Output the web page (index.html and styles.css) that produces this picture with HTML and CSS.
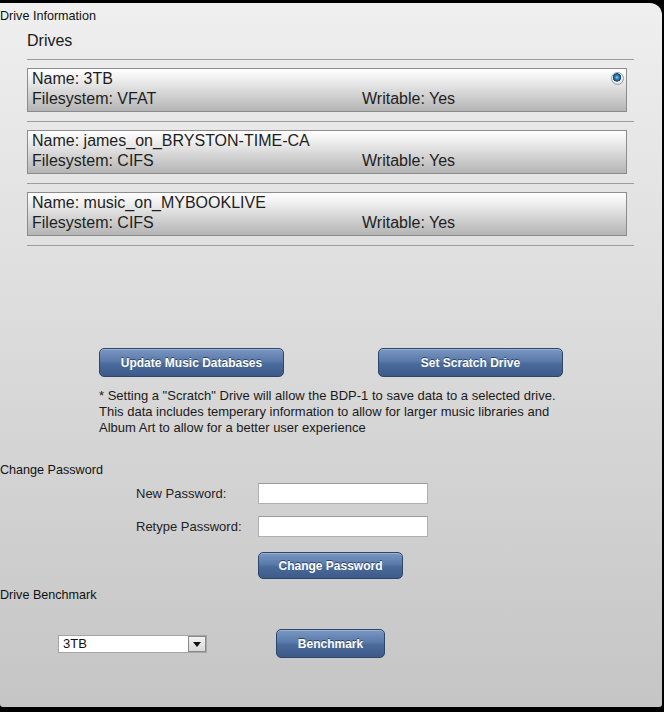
FILE: index.html
```html
<html>
<head>
    <link rel="stylesheet" href="styles.css">
</head>
<body>
<div id='panel'>
    <div class='legend'>Drive Information</div>
    <div id='drives'>
        <div class='title'>Drives</div>
        <div class='rule'></div>
        <div class='drive'>
            <div class='name'>Name: 3TB</div>
            <span class='radio'></span>
            <div class='fs'>Filesystem: VFAT</div>
            <div class='wr'>Writable: Yes</div>
        </div>
        <div class='rule'></div>
        <div class='drive'>
            <div class='name'>Name: james_on_BRYSTON-TIME-CA</div>
            <div class='fs'>Filesystem: CIFS</div>
            <div class='wr'>Writable: Yes</div>
        </div>
        <div class='rule'></div>
        <div class='drive'>
            <div class='name'>Name: music_on_MYBOOKLIVE</div>
            <div class='fs'>Filesystem: CIFS</div>
            <div class='wr'>Writable: Yes</div>
        </div>
        <div class='rule'></div>
    </div>
    <div class='actions'>
        <button class='btn wide'>Update Music Databases</button>
        <button class='btn wide'>Set Scratch Drive</button>
    </div>
    <p class='note'>* Setting a "Scratch" Drive will allow the BDP-1 to save data to a selected drive.<br>
    This data includes temperary information to allow for larger music libraries and<br>
    Album Art to allow for a better user experience</p>
    <div class='legend section'>Change Password</div>
    <div class='password'>
        <label>New Password:</label>
        <input type='password'>
        <label>Retype Password:</label>
        <input type='password'>
        <span></span>
        <button class='btn pw'>Change Password</button>
    </div>
    <div class='legend bench-title'>Drive Benchmark</div>
    <div class='bench'>
        <div class='select'>
            <span>3TB</span>
            <span class='arrow'></span>
        </div>
        <button class='btn bm'>Benchmark</button>
    </div>
</div>
</body>
</html>
```

FILE: styles.css
```css
body {
    margin: 0;
    background: #000;
    font-family: "Liberation Sans", Arial, sans-serif;
}

#panel {
    margin-top: 3px;
    width: 662px;
    height: 704px;
    box-sizing: border-box;
    padding-top: 6px;
    background: linear-gradient(#efefef, #c5c5c5);
    border-radius: 0 12px 3px 3px;
    overflow: hidden;
}

.legend {
    font-size: 12.6px;
    line-height: 14px;
    color: #111;
}

#drives {
    margin-left: 27px;
    width: 607px;
}

.title {
    margin-top: 9px;
    font-size: 16px;
    line-height: 18px;
    color: #1a1a1a;
}

.rule {
    margin-top: 9px;
    height: 0;
    border-top: 1px solid #9c9c9c;
}

.drive {
    display: grid;
    grid-template-columns: 330px 1fr 20px;
    grid-template-rows: 20px 20px;
    margin-top: 8px;
    width: 600px;
    height: 44px;
    box-sizing: border-box;
    padding: 0 0 0 4px;
    border: 1px solid #8c8c8c;
    background: linear-gradient(#ffffff, #f2f2f2 20%, #b4b4b4);
    font-size: 16px;
    line-height: 20px;
    color: #1e1e1e;
}

.drive .name {
    grid-column: 1 / 3;
    grid-row: 1;
}

.drive .fs {
    grid-column: 1;
    grid-row: 2;
}

.drive .wr {
    grid-column: 2;
    grid-row: 2;
}

.radio {
    grid-column: 3;
    grid-row: 1;
    justify-self: end;
    width: 13px;
    height: 13px;
    margin: 3px 2px 0 0;
    box-sizing: border-box;
    border-radius: 50%;
    border: 1px solid #8f9fae;
    background: radial-gradient(circle at 45% 40%, #9fdcf8 0, #3a8cc4 1.5px, #14507e 3.5px, #2a4b66 4px, #fafafa 4.5px, #e2e2e2 6px);
}

.actions {
    display: flex;
    gap: 94px;
    margin: 102px 0 0 99px;
}

.btn {
    height: 29px;
    padding: 0;
    border: 1px solid #2d4669;
    border-radius: 5px;
    background: linear-gradient(#7b97c2, #5a7aaa 45%, #4a6a9b 55%, #3c5b8a);
    color: #fff;
    font-family: "Liberation Sans", Arial, sans-serif;
    font-size: 12px;
    font-weight: bold;
    text-shadow: 0 -1px 0 #2c4466;
    box-shadow: inset 0 1px 0 rgba(255,255,255,0.25);
}

.wide {
    width: 185px;
}

.note {
    margin: 11px 0 0 99px;
    font-size: 13px;
    line-height: 16px;
    color: #1a1a1a;
}

.section {
    margin-top: 27px;
}

.password {
    display: grid;
    grid-template-columns: 122px 170px;
    row-gap: 12px;
    align-items: center;
    margin: 6px 0 0 136px;
    font-size: 13px;
    color: #222;
}

.password input {
    width: 170px;
    height: 21px;
    box-sizing: border-box;
    border: 1px solid #b0b0b0;
    border-top-color: #9a9a9a;
    background: #fff;
}

.pw {
    width: 145px;
    height: 27px;
    margin-top: 3px;
}

.bench-title {
    margin-top: 9px;
}

.bench {
    display: flex;
    align-items: center;
    gap: 69px;
    margin: 27px 0 0 58px;
}

.select {
    display: flex;
    justify-content: space-between;
    align-items: center;
    width: 149px;
    height: 18px;
    box-sizing: border-box;
    padding-left: 4px;
    border: 1px solid #a5a5a5;
    background: #fff;
    font-size: 13px;
    color: #111;
}

.select .arrow {
    width: 18px;
    height: 16px;
    box-sizing: border-box;
    border: 1px solid #8a8a8a;
    background: linear-gradient(#f2f2f2, #d8d8d8);
    position: relative;
}

.select .arrow::after {
    content: '';
    position: absolute;
    left: 4px;
    top: 5px;
    border-left: 4px solid transparent;
    border-right: 4px solid transparent;
    border-top: 5px solid #111;
}

.bm {
    width: 109px;
}
```
